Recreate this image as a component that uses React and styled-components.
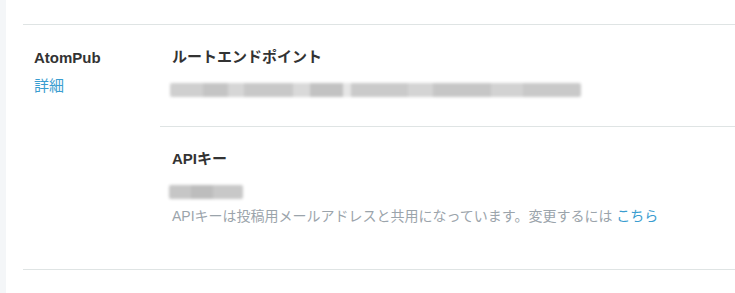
import React from "react";
import styled, { createGlobalStyle } from "styled-components";

const GlobalStyle = createGlobalStyle`
  html, body {
    margin: 0;
    padding: 0;
    background: #fff;
    font-family: "Liberation Sans", "Noto Sans CJK JP", sans-serif;
    color: #333;
  }
`;

const Page = styled.div`
  display: flex;
  min-height: 293px;
`;

const SideStrip = styled.div`
  width: 6px;
  flex-shrink: 0;
  background: #f4f6f8;
`;

const Main = styled.div`
  flex: 1;
  padding: 24px 0 0 17px;
`;

const Section = styled.section`
  display: flex;
  border-top: 1px solid #dfe4e4;
  border-bottom: 1px solid #dfe4e4;
`;

const SideHead = styled.div`
  width: 137px;
  flex-shrink: 0;
  padding: 23px 0 0 11px;
  box-sizing: border-box;
`;

const SideTitle = styled.div`
  font-size: 15px;
  font-weight: 700;
  line-height: 20px;
  color: #333;
`;

const Link = styled.a`
  color: #3a9dd0;
  text-decoration: none;
  cursor: pointer;
`;

const SideLink = styled(Link)`
  display: block;
  margin-top: 8px;
  font-size: 15px;
  line-height: 20px;
`;

const Items = styled.div`
  flex: 1;
`;

const Item = styled.div`
  padding: ${({ last }) => (last ? "22px 0 43px 12px" : "22px 0 29px 12px")};
  & + & {
    border-top: 1px solid #dfe4e4;
  }
`;

const ItemTitle = styled.h3`
  margin: 0;
  font-size: 15px;
  font-weight: 700;
  line-height: 20px;
  color: #333;
`;

const Blurred = styled.div`
  width: ${({ w }) => w}px;
  height: 14px;
  margin: 16px 0 0 ${({ shift }) => shift || 0}px;
  border-radius: 2px;
  background: ${({ pattern }) => pattern};
  filter: blur(1.8px);
`;

const Note = styled.p`
  margin: 7px 0 0;
  font-size: 14px;
  line-height: 20px;
  color: #9ba4ab;
`;

const barLong = `linear-gradient(90deg,
  #cfcfcf 0 8%, #c4c4c4 8% 14%, #d6d6d6 14% 18%, #c8c8c8 18% 30%,
  #d9d9d9 30% 34%, #c2c2c2 34% 42%, #e6e6e6 42% 44%, #cacaca 44% 58%,
  #d4d4d4 58% 64%, #c6c6c6 64% 78%, #d2d2d2 78% 86%, #c9c9c9 86% 100%)`;

const barShort = `linear-gradient(90deg,
  #c6c6c6 0 30%, #bdbdbd 30% 60%, #c8c8c8 60% 100%)`;

export default function App() {
  return (
    <>
      <GlobalStyle />
      <Page>
        <SideStrip />
        <Main>
          <Section>
            <SideHead>
              <SideTitle>AtomPub</SideTitle>
              <SideLink>詳細</SideLink>
            </SideHead>
            <Items>
              <Item>
                <ItemTitle>ルートエンドポイント</ItemTitle>
                <Blurred w={411} shift={-2} pattern={barLong} />
              </Item>
              <Item last>
                <ItemTitle>APIキー</ItemTitle>
                <Blurred w={74} shift={-3} pattern={barShort} />
                <Note>
                  APIキーは投稿用メールアドレスと共用になっています。変更するには <Link>こちら</Link>
                </Note>
              </Item>
            </Items>
          </Section>
        </Main>
      </Page>
    </>
  );
}
